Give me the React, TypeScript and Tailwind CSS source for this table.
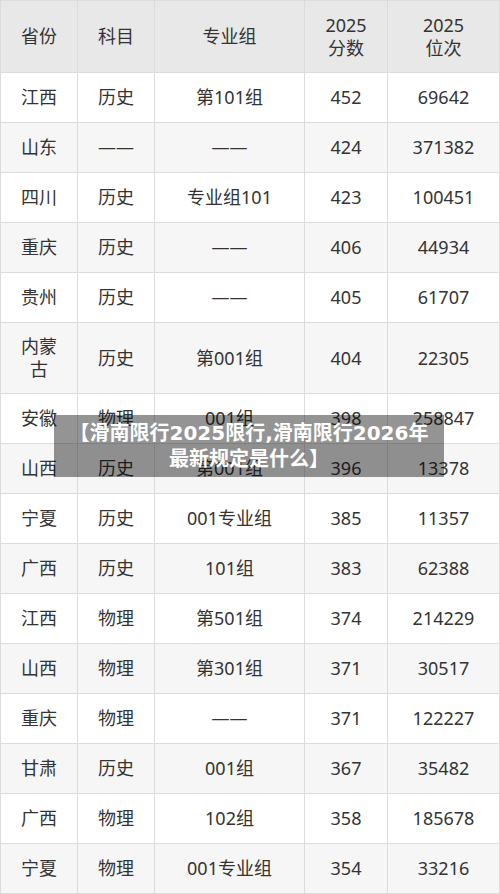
import React from "react";

type Row = { p: string; s: string; g: string; score: string; rank: string; tall?: boolean };

const rows: Row[] = [
  { p: "江西", s: "历史", g: "第101组", score: "452", rank: "69642" },
  { p: "山东", s: "——", g: "——", score: "424", rank: "371382" },
  { p: "四川", s: "历史", g: "专业组101", score: "423", rank: "100451" },
  { p: "重庆", s: "历史", g: "——", score: "406", rank: "44934" },
  { p: "贵州", s: "历史", g: "——", score: "405", rank: "61707" },
  { p: "内蒙古", s: "历史", g: "第001组", score: "404", rank: "22305", tall: true },
  { p: "安徽", s: "物理", g: "001组", score: "398", rank: "258847" },
  { p: "山西", s: "历史", g: "第001组", score: "396", rank: "13378" },
  { p: "宁夏", s: "历史", g: "001专业组", score: "385", rank: "11357" },
  { p: "广西", s: "历史", g: "101组", score: "383", rank: "62388" },
  { p: "江西", s: "物理", g: "第501组", score: "374", rank: "214229" },
  { p: "山西", s: "物理", g: "第301组", score: "371", rank: "30517" },
  { p: "重庆", s: "物理", g: "——", score: "371", rank: "122227" },
  { p: "甘肃", s: "历史", g: "001组", score: "367", rank: "35482" },
  { p: "广西", s: "物理", g: "102组", score: "358", rank: "185678" },
  { p: "宁夏", s: "物理", g: "001专业组", score: "354", rank: "33216" },
];

const cell = "flex items-center justify-center text-center border-r border-b border-[#dcdcdc]";

export default function App() {
  return (
    <div
      className="relative w-[500px] h-[894px] overflow-hidden bg-white text-[#333333] text-[18px] leading-[23px]"
      style={{ fontFamily: '"Noto Sans", "Noto Sans CJK SC", sans-serif' }}
    >
      <div className="border-l border-t border-[#dcdcdc] w-[500px]">
        <div className="grid grid-cols-[77px_77px_150px_83px_112px] h-[72px] bg-[#e8e8e8]">
          <div className={cell}>省份</div>
          <div className={cell}>科目</div>
          <div className={cell}>专业组</div>
          <div className={cell}>
            2025
            <br />
            分数
          </div>
          <div className={cell}>
            2025
            <br />
            位次
          </div>
        </div>
        {rows.map((r, i) => (
          <div
            key={i}
            className={`grid grid-cols-[77px_77px_150px_83px_112px] ${r.tall ? "h-[71px]" : "h-[50px]"} ${
              i % 2 === 0 ? "bg-white" : "bg-[#f6f6f6]"
            }`}
          >
            <div className={cell}>
              {r.tall ? <span className="w-[40px] break-all">内蒙古</span> : r.p}
            </div>
            <div className={cell}>{r.s}</div>
            <div className={cell}>{r.g}</div>
            <div className={cell}>{r.score}</div>
            <div className={cell}>{r.rank}</div>
          </div>
        ))}
      </div>
      <div
        className="absolute left-[54px] top-[415px] w-[390px] h-[62px] bg-[rgba(0,0,0,0.42)] flex items-center justify-center text-center text-white font-bold text-[20px] leading-[26px]"
        style={{ fontFamily: '"DejaVu Sans", "Noto Sans CJK SC", sans-serif' }}
      >
        <div>
          【滑南限行2025限行,滑南限行2026年
          <br />
          最新规定是什么】
        </div>
      </div>
    </div>
  );
}
